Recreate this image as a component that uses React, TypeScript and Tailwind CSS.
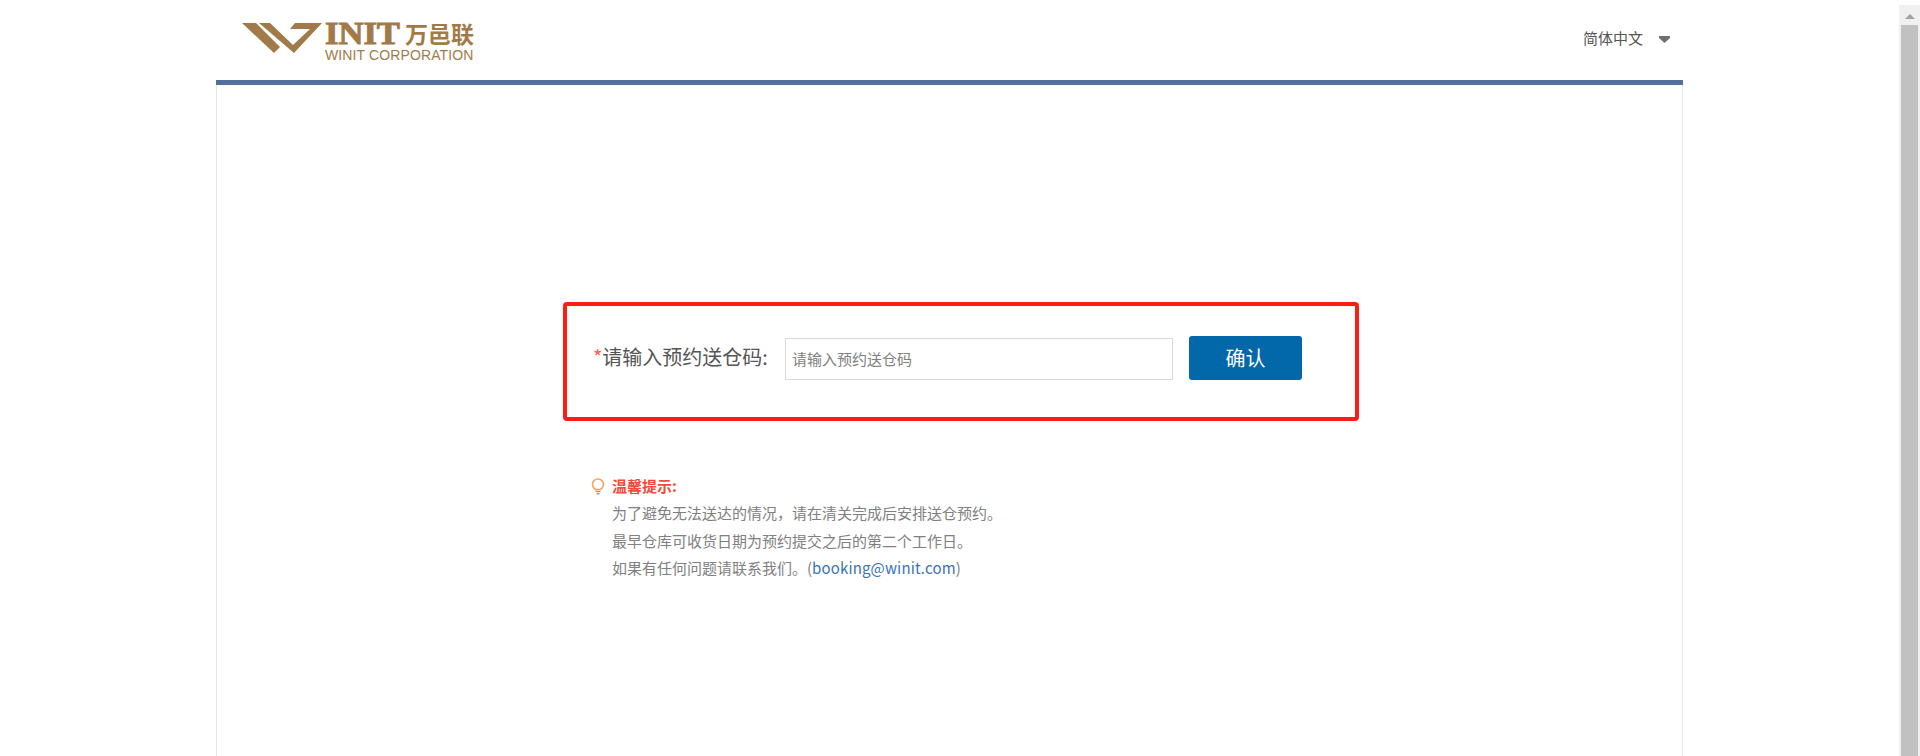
const cjk = "font-['Microsoft_YaHei','Noto_Sans_CJK_SC',sans-serif]";

function LogoMark() {
  return (
    <svg width="80" height="30" viewBox="0 0 80 30" className="mt-[23px] shrink-0">
      <path fill="#a27a49" d="M0 0H14L33 19L38 24L32 30Z" />
      <path fill="#a27a49" d="M17 0H28L51 22L68 6H48L53 0H80L52 30Z" />
    </svg>
  );
}

function Bulb() {
  return (
    <svg width="14" height="17" viewBox="0 0 14 17" className="shrink-0" fill="none">
      <path d="M4.5 11.5C3 10.4 1.5 8.8 1.5 6.5a5.5 5.5 0 0 1 11 0c0 2.3-1.5 3.9-3 5z" stroke="#f7a35c" strokeWidth="1.6" />
      <path d="M4.5 13.5h5M5.5 15.8h3" stroke="#f58a33" strokeWidth="1.6" />
    </svg>
  );
}

function Caret() {
  return (
    <svg width="11" height="7" viewBox="0 0 11 7" className="ml-[16px] mt-[2px] shrink-0">
      <path fill="#707070" d="M0 0H11V2L5.5 7L0 2Z" />
    </svg>
  );
}

export default function App() {
  return (
    <div className={`flex h-[756px] w-[1920px] overflow-hidden bg-white ${cjk}`}>
      <div className="w-[1899px] shrink-0">
        <div className="ml-[216px] flex w-[1467px] flex-col">
          <header className="flex h-[80px] items-start justify-between">
            <div className="ml-[26px] flex items-start">
              <LogoMark />
              <div className="ml-[3px] mt-[20px] flex flex-col">
                <div className="flex h-[26px] items-center">
                  <span className="w-[75px] origin-left scale-x-[1.08] font-['Liberation_Serif'] text-[32px] leading-[26px] font-bold text-[#a27a49] [-webkit-text-stroke:1px_#a27a49]">
                    INIT
                  </span>
                  <span className="ml-[5px] text-[23px] leading-[26px] font-bold text-[#a27a49]">万邑联</span>
                </div>
                <span className="mt-[2px] font-['Liberation_Sans'] text-[14px] leading-[14px] tracking-[0.12px] whitespace-nowrap text-[#a27a49]">
                  WINIT CORPORATION
                </span>
              </div>
            </div>
            <div className="mr-[13px] mt-[28px] flex items-center">
              <span className="text-[15px] leading-[20px] text-[#555555]">简体中文</span>
              <Caret />
            </div>
          </header>
          <div className="h-[5px] bg-[#52709b]" />
          <main className="flex h-[671px] flex-col border-x border-[#e6e6e6] pl-[346px]">
            <div className="mt-[217px] flex h-[119px] w-[796px] items-start rounded-[4px] border-4 border-[#ff1c12] pl-[26px] pt-[30px]">
              <label className="mt-[0px] w-[192px] shrink-0 text-[20px] leading-[42px] whitespace-nowrap text-[#555555]">
                <span className="text-[#ff5b4d]">*</span>请输入预约送仓码:
              </label>
              <input
                placeholder="请输入预约送仓码"
                className="mt-[2px] h-[42px] w-[388px] border border-[#d9d9d9] px-[6px] pb-[2px] text-[15px] outline-none placeholder:text-[#808080]"
              />
              <button className="ml-[16px] h-[44px] w-[113px] rounded-[3px] bg-[#0368a9] text-[20px] text-white">
                确认
              </button>
            </div>
            <section className="ml-[28px] mt-[55px]">
              <div className="flex h-[20px] items-center">
                <Bulb />
                <strong className="ml-[7px] text-[15px] font-bold text-[#f4493c]">温馨提示:</strong>
              </div>
              <div className="mt-[3px] ml-[21px] text-[15px] leading-[27.5px] text-[#808080]">
                <p>为了避免无法送达的情况，请在清关完成后安排送仓预约。</p>
                <p>最早仓库可收货日期为预约提交之后的第二个工作日。</p>
                <p>
                  如果有任何问题请联系我们。(<span className="tracking-[0.15px] text-[#3a74b4]">booking@winit.com</span>)
                </p>
              </div>
            </section>
          </main>
        </div>
      </div>
      <aside className="mt-[5px] flex h-[751px] w-[21px] flex-col items-center bg-[#f0f0f0]">
        <div className="flex h-[21px] w-full items-center justify-center pt-[2px]">
          <span className="h-0 w-0 border-x-[5px] border-b-[5px] border-x-transparent border-b-[#a3a3a3]" />
        </div>
        <div className="h-full w-[17px] bg-[#c1c1c1]" />
      </aside>
    </div>
  );
}
